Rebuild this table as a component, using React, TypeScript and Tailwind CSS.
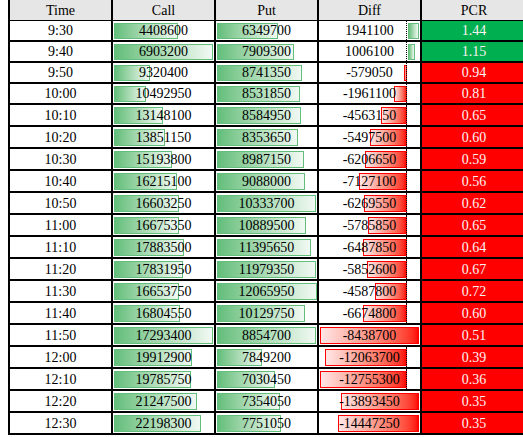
import React from "react";

type Row = {
  time: string;
  call: string;
  callEnd: number;
  put: string;
  putEnd: number;
  diff: string;
  diffFrom: number;
  diffTo: number;
  axis: boolean;
  pcr: string;
};

// bar ends are page x positions read off the sheet
const rows: Row[] = [
  { time: "9:30", call: "4408600", callEnd: 178, put: "6349700", putEnd: 278, diff: "1941100", diffFrom: 408, diffTo: 419, axis: true, pcr: "1.44" },
  { time: "9:40", call: "6903200", callEnd: 213, put: "7909300", putEnd: 294, diff: "1006100", diffFrom: 408, diffTo: 415, axis: true, pcr: "1.15" },
  { time: "9:50", call: "9320400", callEnd: 150, put: "8741350", putEnd: 302, diff: "-579050", diffFrom: 404, diffTo: 407, axis: true, pcr: "0.94" },
  { time: "10:00", call: "10492950", callEnd: 146, put: "8531850", putEnd: 300, diff: "-1961100", diffFrom: 394, diffTo: 407, axis: true, pcr: "0.81" },
  { time: "10:10", call: "13148100", callEnd: 163, put: "8584950", putEnd: 301, diff: "-4563150", diffFrom: 381, diffTo: 407, axis: true, pcr: "0.65" },
  { time: "10:20", call: "13851150", callEnd: 165, put: "8353650", putEnd: 298, diff: "-5497500", diffFrom: 370, diffTo: 407, axis: true, pcr: "0.60" },
  { time: "10:30", call: "15193800", callEnd: 172, put: "8987150", putEnd: 304, diff: "-6206650", diffFrom: 365, diffTo: 407, axis: true, pcr: "0.59" },
  { time: "10:40", call: "16215100", callEnd: 177, put: "9088000", putEnd: 305, diff: "-7127100", diffFrom: 359, diffTo: 407, axis: true, pcr: "0.56" },
  { time: "10:50", call: "16603250", callEnd: 179, put: "10333700", putEnd: 316, diff: "-6269550", diffFrom: 364, diffTo: 407, axis: true, pcr: "0.62" },
  { time: "11:00", call: "16675350", callEnd: 179, put: "10889500", putEnd: 306, diff: "-5785850", diffFrom: 368, diffTo: 407, axis: true, pcr: "0.65" },
  { time: "11:10", call: "17883500", callEnd: 184, put: "11395650", putEnd: 311, diff: "-6487850", diffFrom: 363, diffTo: 407, axis: true, pcr: "0.64" },
  { time: "11:20", call: "17831950", callEnd: 183, put: "11979350", putEnd: 316, diff: "-5852600", diffFrom: 367, diffTo: 407, axis: true, pcr: "0.67" },
  { time: "11:30", call: "16653750", callEnd: 179, put: "12065950", putEnd: 317, diff: "-4587800", diffFrom: 375, diffTo: 407, axis: true, pcr: "0.72" },
  { time: "11:40", call: "16804550", callEnd: 180, put: "10129750", putEnd: 305, diff: "-6674800", diffFrom: 363, diffTo: 407, axis: true, pcr: "0.60" },
  { time: "11:50", call: "17293400", callEnd: 213, put: "8854700", putEnd: 316, diff: "-8438700", diffFrom: 320, diffTo: 419, axis: false, pcr: "0.51" },
  { time: "12:00", call: "19912900", callEnd: 192, put: "7849200", putEnd: 262, diff: "-12063700", diffFrom: 325, diffTo: 407, axis: true, pcr: "0.39" },
  { time: "12:10", call: "19785750", callEnd: 191, put: "7030450", putEnd: 275, diff: "-12755300", diffFrom: 320, diffTo: 407, axis: true, pcr: "0.36" },
  { time: "12:20", call: "21247500", callEnd: 197, put: "7354050", putEnd: 280, diff: "-13893450", diffFrom: 341, diffTo: 419, axis: false, pcr: "0.35" },
  { time: "12:30", call: "22198300", callEnd: 201, put: "7751050", putEnd: 281, diff: "-14447250", diffFrom: 338, diffTo: 419, axis: false, pcr: "0.35" },
];

const GreenBar = ({ left, width }: { left: number; width: number }) => (
  <div
    className="absolute top-[2px] bottom-[1px] border border-[#63be7b] bg-linear-to-r from-[#63be7b] to-[#f1f9f3]"
    style={{ left, width }}
  />
);

const RedBar = ({ left, width }: { left: number; width: number }) => (
  <div
    className="absolute top-[2px] bottom-[1px] border border-[#ff0000] bg-linear-to-r from-[#ffe6e6] to-[#ff0000]"
    style={{ left, width }}
  />
);

const App = () => {
  return (
    <div className="h-[437px] w-[523px] overflow-hidden bg-white [font-family:Liberation_Serif,serif] text-[14px] text-black">
      <div className="ml-[8px] w-[530px] border-l-2 border-black">
        <div className="flex h-[21px] border-b border-black bg-[#e6e6e6]">
          <div className="flex w-[103px] items-center justify-center border-r-2 border-black">Time</div>
          <div className="flex w-[103px] items-center justify-center border-r-2 border-black">Call</div>
          <div className="flex w-[103px] items-center justify-center border-r-2 border-black">Put</div>
          <div className="flex w-[103px] items-center justify-center border-r-2 border-black">Diff</div>
          <div className="flex w-[104px] items-center justify-center">PCR</div>
        </div>
        {rows.map((r, i) => {
          const positive = !r.diff.startsWith("-");
          return (
            <div key={r.time} className={`flex border-b-2 border-black ${i < 4 ? "h-[21px]" : "h-[22px]"}`}>
              <div className="flex w-[103px] items-center justify-center border-r-2 border-black">{r.time}</div>
              <div className="relative flex w-[103px] items-center justify-center border-r-2 border-black">
                <GreenBar left={1} width={r.callEnd - 114} />
                <span className="relative">{r.call}</span>
              </div>
              <div className="relative flex w-[103px] items-center justify-center border-r-2 border-black">
                <GreenBar left={1} width={r.putEnd - 217} />
                <span className="relative">{r.put}</span>
              </div>
              <div className="relative flex w-[103px] items-center justify-center border-r-2 border-black">
                {positive ? (
                  <GreenBar left={r.diffFrom - 319} width={r.diffTo - r.diffFrom} />
                ) : (
                  <RedBar left={r.diffFrom - 319} width={r.diffTo - r.diffFrom} />
                )}
                {r.axis && <div className="absolute top-0 bottom-0 left-[87px] border-l border-dotted border-black" />}
                <span className="relative">{r.diff}</span>
              </div>
              <div
                className={`flex w-[104px] items-center justify-center text-[#fdf2f2] ${
                  parseFloat(r.pcr) >= 1 ? "bg-[#00b050]" : "bg-[#ff0000]"
                }`}
              >
                {r.pcr}
              </div>
            </div>
          );
        })}
      </div>
    </div>
  );
};

export default App;
